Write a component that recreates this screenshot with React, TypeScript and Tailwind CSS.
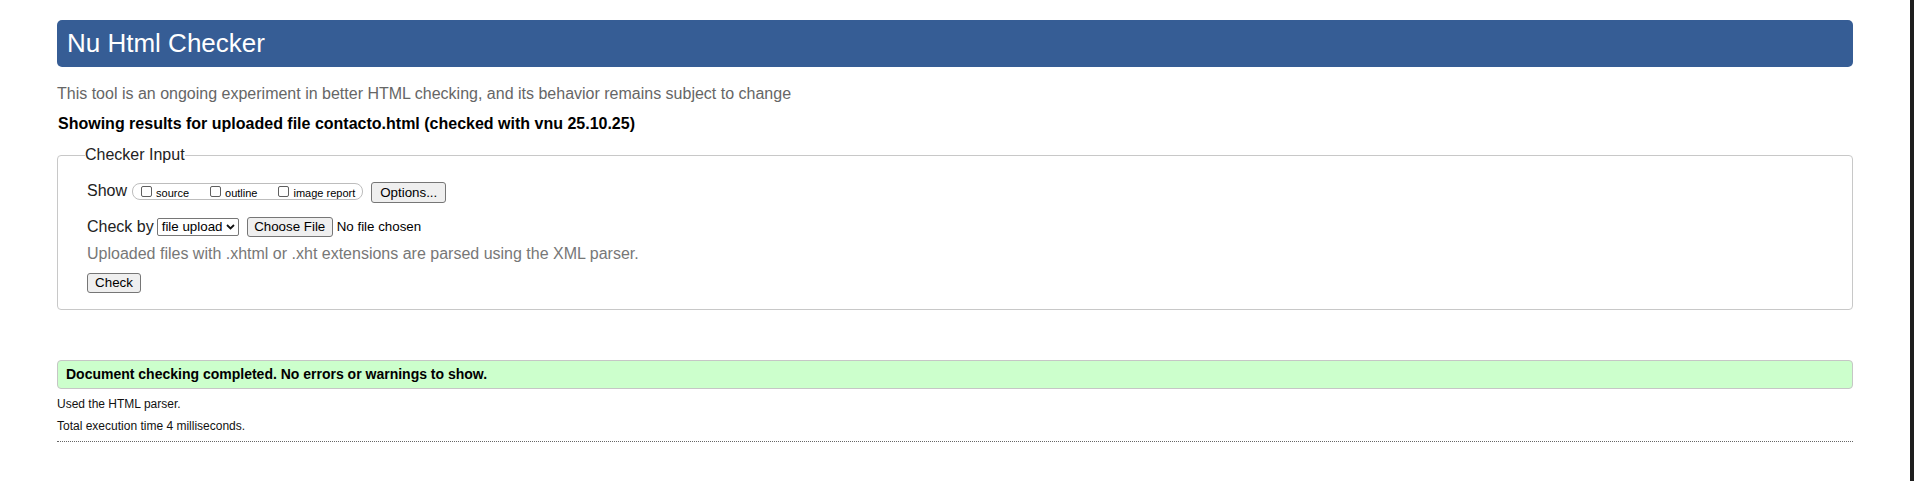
import React from "react";

const font = { fontFamily: '"Liberation Sans", Arial, sans-serif' };

function Btn({ children, className = "" }: { children: React.ReactNode; className?: string }) {
  return (
    <button
      type="button"
      className={
        "h-[20px] px-[6px] border border-[#767676] rounded-[3px] bg-[#efefef] text-[13.33px] leading-[16px] text-black " +
        className
      }
    >
      {children}
    </button>
  );
}

function Check({ label, className = "" }: { label: string; className?: string }) {
  return (
    <label className={"flex items-center " + className}>
      <input
        type="checkbox"
        className="appearance-none w-[11px] h-[11px] border border-[#5f5f5f] rounded-[2px] bg-white m-0"
      />
      <span className="ml-[4px] text-[11px] leading-[13px] mt-[3px] text-black">{label}</span>
    </label>
  );
}

export default function App() {
  return (
    <div className="flex h-[481px] w-full bg-white" style={font}>
      <div className="flex-1 px-[57px] pt-[20px] text-[#111]">
        <h1 className="rounded-[5px] bg-[#365d95] text-white text-[26px] leading-[27px] py-[10px] pl-[10px] font-normal">
          Nu Html Checker
        </h1>
        <p className="mt-[18px] text-[16px] leading-[18px] text-[#666]">
          This tool is an ongoing experiment in better HTML checking, and its behavior remains subject to change
        </p>
        <p className="mt-[12px] text-[16px] leading-[18px] font-bold text-black pl-[1px]">
          Showing results for uploaded file contacto.html (checked with vnu 25.10.25)
        </p>
        <fieldset className="mt-[13px] border border-[#c8c8c8] rounded-[4px] pl-[29px] pr-[29px] pt-[18px] pb-[15px]">
          <legend className="text-[16px] leading-[18px] text-[#222] -ml-[2px]">Checker Input</legend>
          <div className="flex items-start h-[21px]">
            <span className="text-[16px] leading-[18px] text-[#222]">Show</span>
            <div className="ml-[5px] mt-[1px] h-[17px] border border-[#bdbdbd] rounded-[8px] flex items-center pl-[8px] pr-[7px]">
              <Check label="source" />
              <Check label="outline" className="ml-[21px]" />
              <Check label="image report" className="ml-[21px]" />
            </div>
            <Btn className="ml-[8px] h-[21px] w-[75px]">Options...</Btn>
          </div>
          <div className="flex items-center mt-[14px] h-[20px]">
            <span className="text-[16px] leading-[18px] text-[#222]">Check by</span>
            <div className="ml-[3px] w-[82px] h-[18px] border border-[#767676] rounded-[2px] bg-white flex items-center pl-[4px] pr-[3px]">
              <span className="text-[13.33px] leading-[16px] text-black">file upload</span>
              <svg className="ml-auto" width="9" height="6" viewBox="0 0 9 6">
                <polyline points="1,1 4.5,4.5 8,1" fill="none" stroke="#111" strokeWidth="1.8" />
              </svg>
            </div>
            <Btn className="ml-[8px] w-[86px]">Choose File</Btn>
            <span className="ml-[4px] text-[13.33px] leading-[16px] text-black">No file chosen</span>
          </div>
          <p className="mt-[8px] text-[16px] leading-[18px] text-[#777]">
            Uploaded files with .xhtml or .xht extensions are parsed using the XML parser.
          </p>
          <Btn className="mt-[10px] w-[54px]">Check</Btn>
        </fieldset>
        <div className="mt-[50px] h-[29px] border border-[#c6c6c6] rounded-[4px] bg-[#ccffcc] flex items-center pl-[8px]">
          <span className="text-[14px] leading-[17px] font-bold text-black">
            Document checking completed. No errors or warnings to show.
          </span>
        </div>
        <p className="mt-[8px] text-[12px] leading-[14px] text-[#111]">Used the HTML parser.</p>
        <p className="mt-[8px] text-[12px] leading-[14px] text-[#111]">Total execution time 4 milliseconds.</p>
        <div className="mt-[8px] border-b border-dotted border-[#666]" />
      </div>
      <div className="w-[4px] bg-[#1e1e1e]" />
    </div>
  );
}
